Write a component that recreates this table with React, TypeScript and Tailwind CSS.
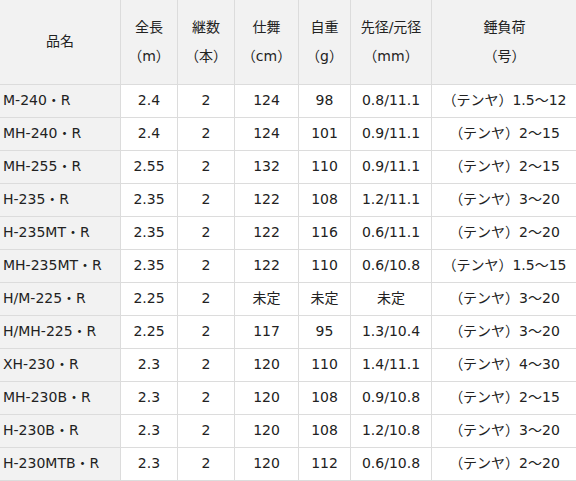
import React from "react";

const rows: string[][] = [
  ["M-240・R", "2.4", "2", "124", "98", "0.8/11.1", "（テンヤ）1.5～12"],
  ["MH-240・R", "2.4", "2", "124", "101", "0.9/11.1", "（テンヤ）2～15"],
  ["MH-255・R", "2.55", "2", "132", "110", "0.9/11.1", "（テンヤ）2～15"],
  ["H-235・R", "2.35", "2", "122", "108", "1.2/11.1", "（テンヤ）3～20"],
  ["H-235MT・R", "2.35", "2", "122", "116", "0.6/11.1", "（テンヤ）2～20"],
  ["MH-235MT・R", "2.35", "2", "122", "110", "0.6/10.8", "（テンヤ）1.5～15"],
  ["H/M-225・R", "2.25", "2", "未定", "未定", "未定", "（テンヤ）3～20"],
  ["H/MH-225・R", "2.25", "2", "117", "95", "1.3/10.4", "（テンヤ）3～20"],
  ["XH-230・R", "2.3", "2", "120", "110", "1.4/11.1", "（テンヤ）4～30"],
  ["MH-230B・R", "2.3", "2", "120", "108", "0.9/10.8", "（テンヤ）2～15"],
  ["H-230B・R", "2.3", "2", "120", "108", "1.2/10.8", "（テンヤ）3～20"],
  ["H-230MTB・R", "2.3", "2", "120", "112", "0.6/10.8", "（テンヤ）2～20"],
];

const headers: [string, string][] = [
  ["全長", "（m）"],
  ["継数", "（本）"],
  ["仕舞", "（cm）"],
  ["自重", "（g）"],
  ["先径/元径", "（mm）"],
  ["錘負荷", "（号）"],
];

export default function App() {
  return (
    <div
      className="w-[576px] h-[481px] overflow-hidden bg-white text-[#222] text-[14px]"
      style={{ fontFamily: '"DejaVu Sans", "Noto Sans CJK JP", sans-serif' }}
    >
      <table className="table-fixed border-collapse w-[578px] -ml-px">
        <colgroup>
          <col className="w-[121px]" />
          <col className="w-[57px]" />
          <col className="w-[57px]" />
          <col className="w-[64px]" />
          <col className="w-[52px]" />
          <col className="w-[81px]" />
          <col className="w-[146px]" />
        </colgroup>
        <thead>
          <tr className="h-[84px] bg-[#f2f2f2]">
            <th className="border border-[#dcdcdc] border-t-0 font-normal text-center align-middle">
              品名
            </th>
            {headers.map(([a, b], i) => (
              <th
                key={i}
                className="border border-[#dcdcdc] border-t-0 font-normal text-center align-middle leading-[29px] whitespace-nowrap"
              >
                <div>{a}</div>
                <div>{b}</div>
              </th>
            ))}
          </tr>
        </thead>
        <tbody>
          {rows.map((r, ri) => (
            <tr key={ri} className="h-[33px]">
              {r.map((c, ci) => (
                <td
                  key={ci}
                  className={
                    ci === 0
                      ? "border border-[#dcdcdc] bg-[#f2f2f2] pl-[3px] text-left whitespace-nowrap"
                      : "border border-[#dcdcdc] bg-white text-center whitespace-nowrap"
                  }
                >
                  {c}
                </td>
              ))}
            </tr>
          ))}
        </tbody>
      </table>
    </div>
  );
}
